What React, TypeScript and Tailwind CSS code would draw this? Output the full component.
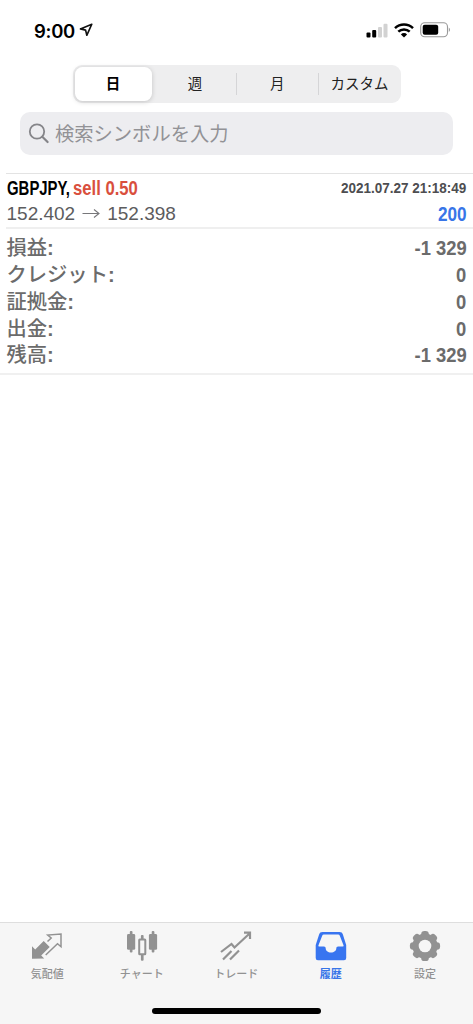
import React from "react";

const jp = "font-['Liberation_Sans','Noto_Sans_CJK_JP',sans-serif]";

function StatusBar() {
  return (
    <div className="flex h-[65px] items-start justify-between pl-[34px] pr-[22px] pt-[20px]">
      <div className="flex h-[20px] items-center">
        <span className="w-[42px] whitespace-nowrap pt-[1px] font-['Inter',sans-serif] text-[18.500px] font-semibold leading-[20px] tracking-[-0.3px] text-black">9:00</span>
        <svg width="14" height="14" viewBox="0 0 14 14" className="ml-[3px] block" fill="none" stroke="#111" strokeWidth="1.6" strokeLinejoin="round">
          <path d="M12.8 1.200 1.400 5.900l5.200 1.200 1.200 5.200z" />
        </svg>
      </div>
      <div className="flex h-[20px] items-center">
        <svg width="22" height="15" viewBox="0 0 22 15" className="block">
          <rect x="0.5" y="9.5" width="4" height="5" rx="1" fill="#000" />
          <rect x="6.2" y="7" width="4" height="7.5" rx="1" fill="#000" />
          <rect x="12" y="4" width="4" height="10.5" rx="1" fill="#d2d2d2" />
          <rect x="17.5" y="0.8" width="4" height="13.7" rx="1" fill="#d2d2d2" />
        </svg>
        <svg width="20" height="15" viewBox="0 0 20 15" className="ml-[6px] block" fill="none" stroke="#000" strokeWidth="2.5">
          <path d="M1 5.1a13 13 0 0 1 18 0" />
          <path d="M4.3 8.7a8.2 8.2 0 0 1 11.4 0" />
          <path d="M10 14.5 6.9 11.4a4.4 4.4 0 0 1 6.2 0z" fill="#000" stroke="none" />
        </svg>
        <svg width="31" height="16" viewBox="0 0 31 16" className="ml-[6px] block">
          <rect x="0.7" y="0.7" width="26.8" height="14" rx="4" fill="none" stroke="#999" strokeWidth="1.1" />
          <rect x="2.7" y="2.7" width="15.5" height="10" rx="2" fill="#000" />
          <path d="M28.8 5.500c1.600.8 1.600 3.700 0 4.500z" fill="#999" />
        </svg>
      </div>
    </div>
  );
}

function Segments() {
  return (
    <div className="ml-[72.5px] flex h-[38px] w-[328.5px] items-center rounded-[9px] bg-[#eeeeef] p-[2px] text-[14.5px] text-[#222]">
      <div className="flex h-[34px] w-[77px] items-center justify-center rounded-[7.5px] bg-white pt-[2px] font-bold text-black shadow-[0_1px_5px_rgba(0,0,0,0.18)]">日</div>
      <div className="flex h-[22px] w-[85px] items-center justify-center border-r border-[#d5d5d7] pl-[3px] pt-[2px]">週</div>
      <div className="flex h-[22px] w-[82.5px] items-center justify-center border-r border-[#d5d5d7] pt-[2px]">月</div>
      <div className="flex flex-1 items-center justify-center whitespace-nowrap pl-[1px] pt-[2px]">カスタム</div>
    </div>
  );
}

function Search() {
  return (
    <div className="ml-[20px] mt-[9px] flex h-[43px] w-[433px] items-center rounded-[10px] bg-[#ededf0] pl-[8px]">
      <svg width="22" height="22" viewBox="0 0 22 22" className="block" fill="none" stroke="#858589" strokeWidth="1.8" strokeLinecap="round">
        <circle cx="9" cy="8.5" r="7.2" />
        <path d="m14.300 13.800 5.300 5.200" strokeWidth="2.200" />
      </svg>
      <span className="ml-[5px] mt-[2px] text-[19.3px] leading-[28px] text-[#929296]">検索シンボルを入力</span>
    </div>
  );
}

const summary = [
  ["損益:", "-1 329"],
  ["クレジット:", "0"],
  ["証拠金:", "0"],
  ["出金:", "0"],
  ["残高:", "-1 329"],
];

function History() {
  return (
    <div>
      <div className="ml-[6px] mt-[18px] h-px bg-[#e3e3e3]" />
      <div className="flex h-[53px] flex-col px-[6.5px] pt-[1px]">
        <div className="flex h-[26px] items-center justify-between">
          <span className="flex whitespace-nowrap text-[19.5px] font-bold leading-[26px]">
            <span className="block w-[66.500px] origin-left scale-x-[0.765] text-black">GBPJPY,</span>
            <span className="block origin-left scale-x-[0.855] text-[#d94f3d]">sell 0.50</span>
          </span>
          <span className="origin-right scale-x-[0.9] whitespace-nowrap text-[15px] font-bold leading-[26px] text-[#4d4d50]">2021.07.27 21:18:49</span>
        </div>
        <div className="flex h-[26px] items-center justify-between">
          <span className="flex items-center whitespace-nowrap text-[19px] leading-[26px] text-[#5c5c5e]">
            152.402
            <svg width="19" height="14" viewBox="0 0 19 14" className="mx-[6.500px] block" fill="none" stroke="#77777a" strokeWidth="1.1">
              <path d="M0.500 6.500h16.500M12 2.500 17 6.500l-5 4" />
            </svg>
            152.398
          </span>
          <span className="origin-right scale-x-[0.88] text-[19.5px] font-bold leading-[26px] text-[#3875e8]">200</span>
        </div>
      </div>
      <div className="ml-[6px] h-[2px] bg-[#efefef]" />
      <div className="px-[6.5px] pb-[4px] pt-[6px] text-[#6b6b6b]">
        {summary.map(([label, value]) => (
          <div key={label} className="flex h-[26.75px] items-center justify-between">
            <span className="text-[20.3px] font-medium leading-[26px]">
              {label.slice(0, -1)}
              <span className="font-bold">:</span>
            </span>
            <span className="origin-right scale-x-[0.92] whitespace-nowrap text-[20px] font-bold leading-[26px]">{value}</span>
          </div>
        ))}
      </div>
      <div className="h-[2px] bg-[#f0f0f0]" />
    </div>
  );
}

function QuotesIcon() {
  return (
    <svg width="32" height="32" viewBox="0 0 32 32" fill="none">
      <path d="M1 28.800V16.300L4.200 19.500 12.700 11l6 6-8.500 8.500 3 3z" fill="#929292" />
      <path d="M16.500 11.500 20.200 8l-3.500-3 13.300-1v12.700l-3.500-3L14.700 25" stroke="#929292" strokeWidth="1.500" />
    </svg>
  );
}

function CandlesIcon() {
  return (
    <svg width="32" height="32" viewBox="0 0 32 32">
      <g fill="#929292">
        <rect x="1" y="4" width="8.200" height="15.800" rx="1.400" />
        <rect x="3.800" y="1" width="2.700" height="21.500" rx="1" />
        <rect x="22.900" y="4" width="8.200" height="15.800" rx="1.400" />
        <rect x="25.700" y="1" width="2.700" height="21.500" rx="1" />
        <rect x="14.900" y="5" width="2.700" height="5" rx="1" />
        <rect x="14.900" y="24" width="2.700" height="6.700" rx="1" />
      </g>
      <rect x="13.200" y="9.500" width="6.100" height="14.700" rx="0.500" fill="#f6f6f6" stroke="#929292" strokeWidth="2" />
    </svg>
  );
}

function TradeIcon() {
  return (
    <svg width="32" height="32" viewBox="0 0 32 32" fill="none" stroke="#929292" strokeWidth="2.200">
      <path d="M1 22 11.500 14l3 3.500L29 4M24 2.600h6V9M3 29.500 11.500 21M10 29.500 19 20.500" />
    </svg>
  );
}

function InboxIcon() {
  return (
    <svg width="32" height="32" viewBox="0 0 32 32">
      <path fillRule="evenodd" clipRule="evenodd" fill="#3875f0" d="M7.500 2h17c1.800 0 2.900.8 3.400 2.500l3.300 10.500V28a2.200 2.200 0 0 1-2.200 2.200H2.900A2.200 2.200 0 0 1 .7 28V15L4.100 4.500C4.600 2.800 5.700 2 7.500 2zm1.300 2.500c-.8 0-1.300.4-1.600 1.200L3.500 15.300c-.3.800.1 1.300 1 1.300h4.400c1.200 0 1.800.7 1.800 2 0 2.300 2.200 4 5.300 4s5.300-1.700 5.300-4c0-1.300.6-2 1.800-2h4.400c.9 0 1.300-.5 1-1.300L24.800 5.700c-.3-.8-.8-1.200-1.600-1.200z" />
    </svg>
  );
}

function GearIcon() {
  return (
    <svg width="32" height="32" viewBox="0 0 32 32">
      <g fill="#929292">
        {[0, 45, 90, 135].map((a) => (
          <rect key={a} x="12.200" y="0.900" width="7.600" height="30.200" rx="3.200" transform={`rotate(${a} 16 16)`} />
        ))}
        <circle cx="16" cy="16" r="12.600" />
      </g>
      <circle cx="16" cy="16" r="6.300" fill="#f6f6f6" />
    </svg>
  );
}

const tabs = [
  { label: "気配値", icon: <QuotesIcon />, active: false },
  { label: "チャート", icon: <CandlesIcon />, active: false },
  { label: "トレード", icon: <TradeIcon />, active: false },
  { label: "履歴", icon: <InboxIcon />, active: true },
  { label: "設定", icon: <GearIcon />, active: false },
];

export default function App() {
  return (
    <div className={`flex h-[1024px] w-[473px] flex-col overflow-hidden bg-white ${jp}`}>
      <StatusBar />
      <Segments />
      <Search />
      <History />
      <div className="flex-1" />
      <div className="flex h-[102px] flex-col border-t-[1.5px] border-[#dedede] bg-[#f6f6f6]">
        <div className="flex pr-[0.700px] pt-[7px]">
          {tabs.map((t) => (
            <div key={t.label} className={`flex flex-1 flex-col items-center ${t.active ? "font-bold text-[#3875e8]" : "font-medium text-[#929292]"}`}>
              {t.icon}
              <span className="mt-[4px] whitespace-nowrap text-[11px] leading-[16px]">{t.label}</span>
            </div>
          ))}
        </div>
        <div className="mx-auto mb-[10px] mt-auto h-[6px] w-[169px] rounded-full bg-black" />
      </div>
    </div>
  );
}
